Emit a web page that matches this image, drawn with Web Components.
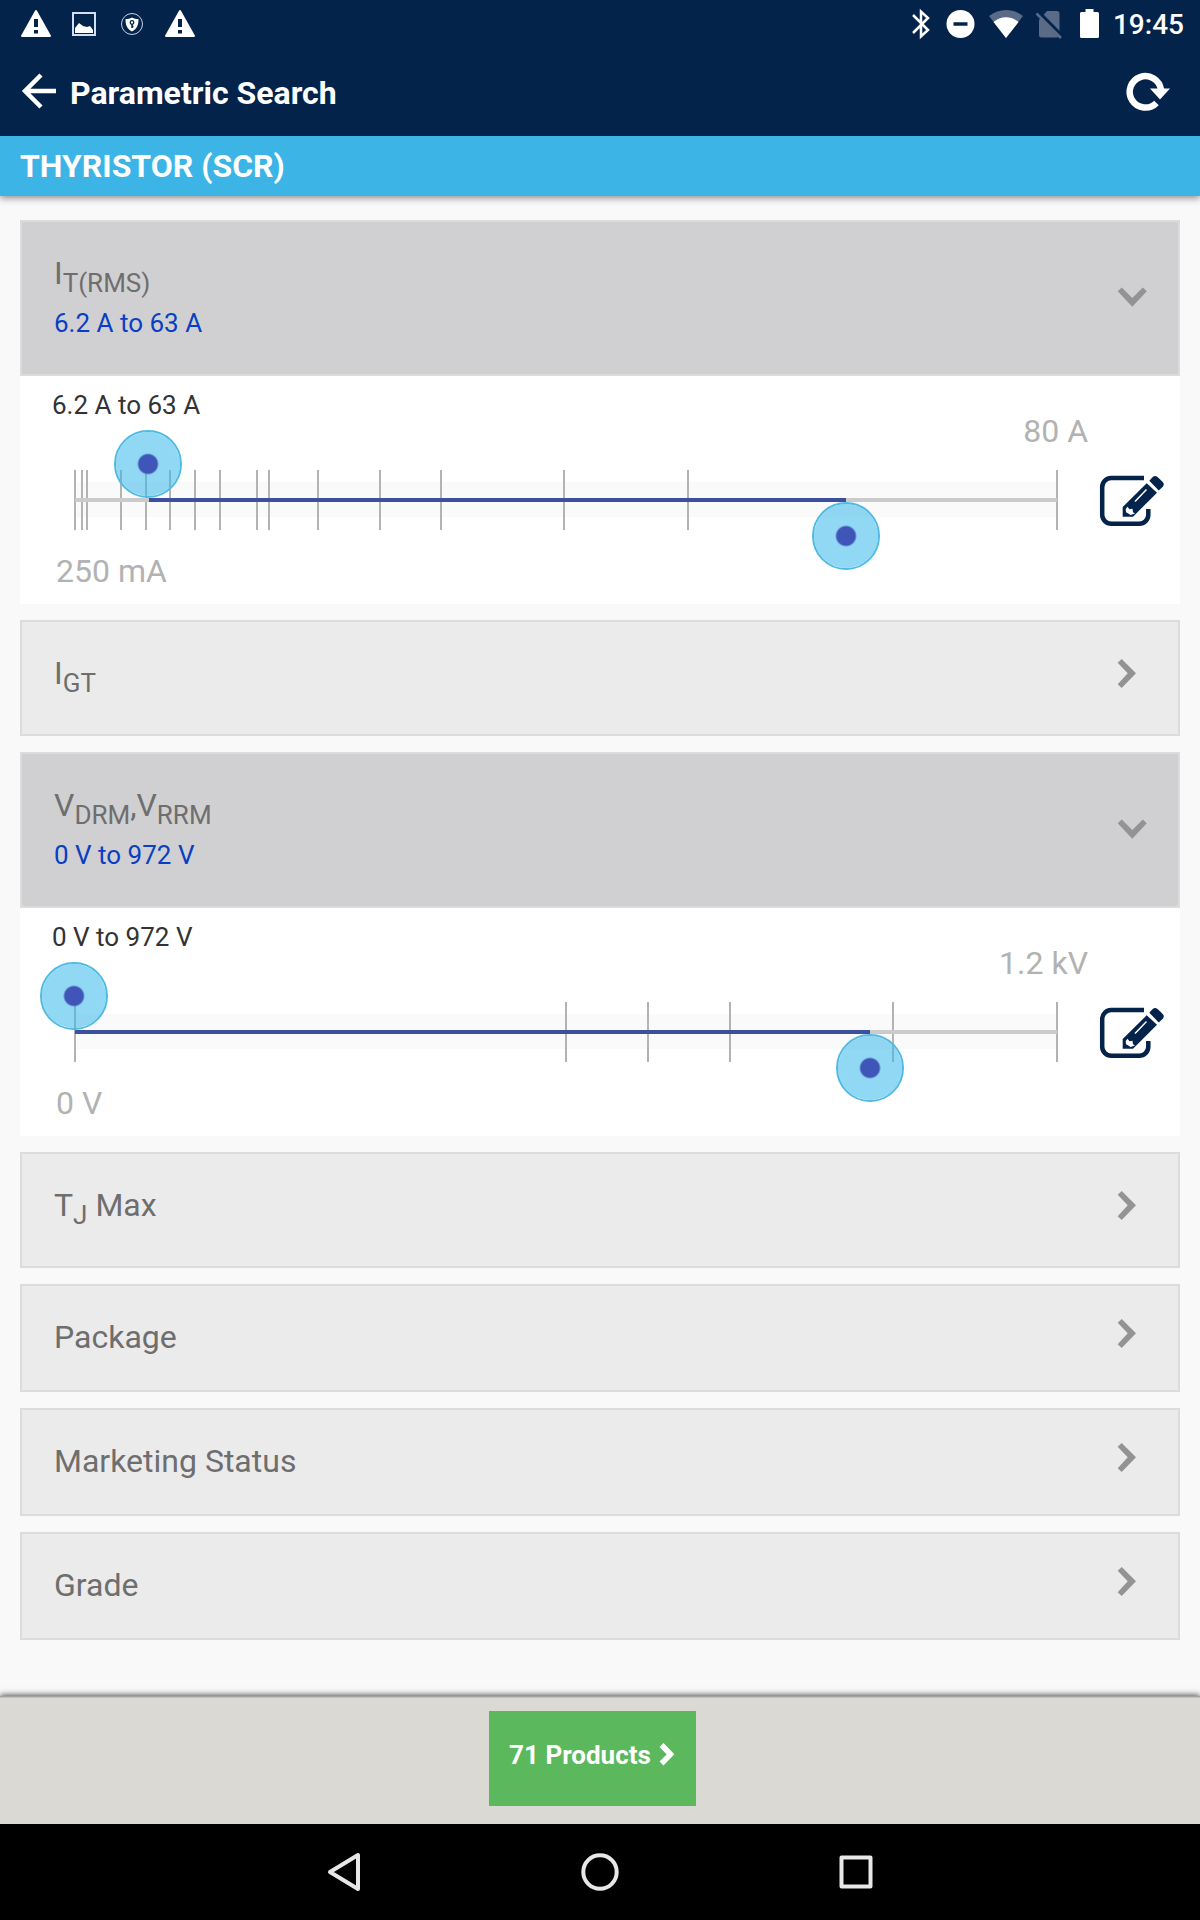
<!DOCTYPE html>
<html lang="en">
<head>
<meta charset="utf-8">
<meta name="viewport" content="width=device-width, initial-scale=1">
<title>Parametric Search</title>
<style>
  html, body { margin: 0; }
  body {
    font-family: Roboto, "Liberation Sans", sans-serif;
    font-size: 32px;
    line-height: 46px;
    color: #333;
    background: #f9f9f9;
  }
  sub { font-size: 26px; line-height: 42px; vertical-align: -8px; }
</style>
</head>
<body>
<search-screen>
  <status-bar slot="top" time="19:45"></status-bar>
  <app-bar slot="top">Parametric Search</app-bar>
  <category-bar slot="top">THYRISTOR (SCR)</category-bar>

  <param-section open>
    <span slot="title">I<sub>T(RMS)</sub></span>
    <span slot="summary">6.2 A to 63 A</span>
    <range-filter name="On-state current" min="0.25" max="80" low="6.23" high="62.85"
      ticks="0.25 0.8 1.25 4 6 8 10 12 15 16 20 25 30 40 50 80">
      <span slot="value">6.2 A to 63 A</span>
      <span slot="max">80 A</span>
      <span slot="min">250 mA</span>
    </range-filter>
  </param-section>
  <param-section><span slot="title">I<sub>GT</sub></span></param-section>
  <param-section open>
    <span slot="title">V<sub>DRM</sub>,V<sub>RRM</sub></span>
    <span slot="summary">0 V to 972 V</span>
    <range-filter name="Off-state voltage" min="0" max="1200" low="0" high="971"
      ticks="0 600 700 800 1000 1200">
      <span slot="value">0 V to 972 V</span>
      <span slot="max">1.2 kV</span>
      <span slot="min">0 V</span>
    </range-filter>
  </param-section>
  <param-section><span slot="title">T<sub>J</sub> Max</span></param-section>
  <param-section><span slot="title">Package</span></param-section>
  <param-section><span slot="title">Marketing Status</span></param-section>
  <param-section><span slot="title">Grade</span></param-section>

  <result-bar slot="bottom">71 Products</result-bar>
  <system-nav slot="bottom"></system-nav>
</search-screen>

<script>
const RESET = `
  *, *::before, *::after { box-sizing: border-box; }
  button { margin: 0; border: 0; padding: 0; background: none; font: inherit; color: inherit; text-align: left; cursor: pointer; }
  svg { display: block; flex: none; overflow: visible; }
`;

function define(name, css, html) {
  customElements.define(name, class extends HTMLElement {
    connectedCallback() {
      if (this.shadowRoot) return;
      const root = this.attachShadow({ mode: "open" });
      const body = typeof html === "function" ? html(this) : html;
      root.innerHTML = `<style>${RESET}${css}</style>${body}`;
    }
  });
}

define("search-screen", `
  :host { display: flex; flex-direction: column; min-height: 100vh; }
  header { box-shadow: 0 2px 7px rgba(0,0,0,.45); }
  main { flex: 1; display: flex; flex-direction: column; gap: 16px; padding: 24px 20px; }
`, `
  <header><slot name="top"></slot></header>
  <main><slot></slot></main>
  <slot name="bottom"></slot>
`);

const WARNING = `<svg width="48" height="48" viewBox="0 0 48 48"><path d="M24 11 38 36H10Z" fill="#fff" stroke="#fff" stroke-width="2" stroke-linejoin="round"/><path d="M22 19h4v8h-4zM22 30h4v3.500h-4z" fill="#03234b"/></svg>`;

define("status-bar", `
  :host { display: flex; justify-content: space-between; align-items: center; height: 48px; padding: 0 16px 0 12px; background: #03234b; color: #fff; }
  div { display: flex; align-items: center; }
  .system { gap: 14px; }
  time { padding-top: 2px; font-size: 28px; font-weight: 500; line-height: 48px; }
`, host => `
  <div>
    ${WARNING}
    <svg width="48" height="48" viewBox="0 0 48 48"><path d="M13 13h22v22H13z" fill="none" stroke="#cfe0f8" stroke-width="2"/><path d="M15 33v-5l4-5 4 3 4 1 3-1 3 4v3Z" fill="#fff"/></svg>
    <svg width="48" height="48" viewBox="0 0 48 48"><circle cx="24" cy="24" r="10.500" fill="none" stroke="#c5d3e6"/><path d="M24 17.500c2 1 4 1.500 6.500 1.500 0 6-1.500 10-6.500 12.500-5-2.500-6.500-6.500-6.500-12.500 2.500 0 4.500-.5 6.500-1.500Z" fill="#fff"/><path d="M24 24v4M24 26.500h1.500" stroke="#03234b" stroke-width="1.500"/><circle cx="24" cy="22.500" r="1.800" fill="none" stroke="#03234b" stroke-width="1.300"/></svg>
    ${WARNING}
  </div>
  <div class="system">
    <svg width="26" height="48" viewBox="-1 0 26 48"><path d="M7 15l15 15-7 6.500V11.500l7 6.500L7 33" fill="none" stroke="#fff" stroke-width="2.500"/></svg>
    <svg width="28" height="48" viewBox="-1 0 28 48"><circle cx="14.500" cy="24" r="14" fill="#fff"/><path d="M7.500 24h14" stroke="#03234b" stroke-width="3.500"/></svg>
    <svg width="34" height="48" viewBox="-1 0 34 48"><path d="M18 38 1 16c10-8 24-8 34 0Z" fill="#596b87"/><path d="M18 38 5.500 22c7-6.500 18-6.500 25 0Z" fill="#fff"/></svg>
    <svg width="30" height="48" viewBox="-1 0 30 48"><path d="M3 20 11 11h10a2.500 2.500 0 0 1 2.500 2.500V35a2.500 2.500 0 0 1-2.500 2.500H5.500A2.500 2.500 0 0 1 3 35Z" fill="#596b87"/><path d="M2 12.500 27 38" stroke="#03234b" stroke-width="5"/><path d="M.5 13.500 25 38" stroke="#596b87" stroke-width="2.500"/></svg>
    <svg width="20" height="48" viewBox="-1 0 20 48"><path d="M5.500 9h8v3h4q1.500 0 1.500 1.500V36.500q0 1.500-1.500 1.500h-16Q0 38 0 36.500v-23Q0 12 1.500 12h4Z" fill="#fff"/></svg>
    <time>${host.getAttribute("time")}</time>
  </div>
`);

define("app-bar", `
  :host { display: flex; align-items: center; gap: 10px; height: 88px; padding: 0 20px; background: #03234b; color: #fff; }
  h1 { flex: 1; margin: 0; padding-top: 2px; font-size: 32px; font-weight: 700; }
`, `
  <button aria-label="Back"><svg width="40" height="40" viewBox="0 0 40 40"><path d="M36 19H6M21 3 5 19l16 16" fill="none" stroke="#fff" stroke-width="4.500"/></svg></button>
  <h1><slot></slot></h1>
  <button aria-label="Reset"><svg width="56" height="40" viewBox="0 1 56 40"><path d="M32.500 32A15.700 15.700 0 1 1 37 19" fill="none" stroke="#fff" stroke-width="6.500"/><path d="M26 17.500h20L36 28.500Z" fill="#fff"/></svg></button>
`);

define("category-bar", `
  :host { display: block; padding: 1px 20px 0; background: #3cb4e6; color: #fff; }
  h2 { margin: 0; font-size: 32px; font-weight: 700; line-height: 59px; }
`, `<h2><slot></slot></h2>`);

define("param-section", `
  :host { display: block; }
  button { display: flex; align-items: center; justify-content: space-between; width: 100%; padding: 0 28px 0 32px; border: 2px solid #dcdcdc; background: #ebebeb; color: #6e6e6e; }
  .text { display: flex; flex-direction: column; padding: 28px 0 30px; }
  ::slotted([slot=summary]) { padding-bottom: 2px; font-size: 26px; line-height: 38px; color: #0a3fc4; }
  :host([open]) button { background: #d0d0d2; }
  .panel { background: #fff; }
`, host => {
  const open = host.hasAttribute("open");
  const shape = open
    ? "M3.700 13.300 7.700 9.500 18.300 20 28.800 9.500 32.800 13.300 18.300 28.700Z"
    : "M7.700 1 3.700 4.700 13.700 15.300 3.700 26.300 7.700 30 22 15.300Z";
  return `
    <button aria-expanded="${open}">
      <span class="text"><slot name="title"></slot><slot name="summary"></slot></span>
      <svg width="36" height="40" viewBox="0 0 36 40"><path d="${shape}" fill="#939393"/></svg>
    </button>
    <div class="panel"><slot></slot></div>`;
});

define("range-filter", `
  :host { display: flex; padding-left: 20px; }
  .field { flex: 1; display: grid; min-width: 0; }
  .field > * { grid-area: 1 / 1; }
  .value { padding: 9px 12px 0; font-size: 26px; line-height: 40px; }
  .max, .min { font-size: 32px; line-height: 46px; color: #b2b2b2; }
  .max { justify-self: end; padding: 32px 4px 0; }
  .min { align-self: end; padding: 0 16px 10px; }
  .slider { display: grid; height: 140px; margin: 54px 0 34px; }
  .slider > * { grid-area: 1 / 1; }
  .scale { align-self: center; padding: 0 35px; }
  input { -webkit-appearance: none; appearance: none; width: 100%; height: 68px; margin: 0; background: none; pointer-events: none; }
  .low { align-self: start; }
  .high { align-self: end; }
  input::-webkit-slider-thumb {
    -webkit-appearance: none; appearance: none; width: 68px; height: 68px; border: 2px solid #4fbbe3; border-radius: 50%;
    background: radial-gradient(circle, #4055b8 9px, rgba(55,184,235,.55) 11px); background-origin: border-box; background-clip: padding-box; pointer-events: auto;
  }
  .edit { align-self: start; padding: 98px 16px 0 8px; }
`, host => {
  const min = +host.getAttribute("min"), max = +host.getAttribute("max");
  const low = +host.getAttribute("low"), high = +host.getAttribute("high");
  const name = host.getAttribute("name");
  const pct = v => (v - min) / (max - min) * 100;
  const ticks = host.getAttribute("ticks").split(/\s+/).map(v =>
    `<line x1="${pct(v)}%" x2="${pct(v)}%" y1="0" y2="60" stroke="#b3b3b3" stroke-width="2"/>`).join("");
  const input = (cls, v, label) =>
    `<input class="${cls}" type="range" min="${min}" max="${max}" step="any" value="${v}" aria-label="${name} ${label}">`;
  return `
    <div class="field">
      <div class="value"><slot name="value"></slot></div>
      <div class="max"><slot name="max"></slot></div>
      <div class="min"><slot name="min"></slot></div>
      <div class="slider">
        <div class="scale">
          <svg width="100%" height="60" shape-rendering="crispEdges">
            <rect x="0" y="12" width="100%" height="35" fill="#fafafa"/>
            ${ticks}
            <rect x="0" y="28" width="100%" height="4" fill="#cbcbcb"/>
            <rect x="${pct(low)}%" y="28" width="${pct(high) - pct(low)}%" height="4" fill="#3d509f"/>
          </svg>
        </div>
        ${input("low", low, "from")}
        ${input("high", high, "to")}
      </div>
    </div>
    <button class="edit" aria-label="Edit ${name}">
      <svg width="64" height="52" viewBox="0 0 64 52" fill="#03234b">
        <path d="M44 4H11.500A9 9 0 0 0 2.200 13V40.500A9 9 0 0 0 11.500 49.700H39A9 9 0 0 0 48.300 40.500V35" fill="none" stroke="#03234b" stroke-width="4.500"/>
        <path d="M46.700 9.300 22.700 33V42.700H33L57 18.700Z" stroke="#fff" stroke-width="6"/>
        <path d="M46.700 9.300 22.700 33V42.700H33L57 18.700Z"/>
        <path d="M49.300 6.700 53 2.700Q55.200 1 57.500 3L62.500 7.700Q64.800 10 63 12.500L58.800 16.500Z"/>
        <path d="M35 27.500 46.500 15.500" stroke="#fff" stroke-width="1.500"/>
        <path d="M27.500 32.700 29.500 35.300 32.500 34.800 33 38.300 35 39.500 30.500 41 28.700 39.800 26 38.300 25.700 35Z" fill="#fff"/>
      </svg>
    </button>`;
});

define("result-bar", `
  :host { display: flex; justify-content: center; padding: 15px 15px 18px 0; background: #dad9d4; box-shadow: inset 0 1px 0 #a3a1a1, inset 0 2px 0 #c2c1be, 0 -1px 6px rgba(0,0,0,.7); }
  button { display: flex; align-items: flex-start; gap: 8px; padding: 24px 22px 31px 20px; background: #5cb85c; color: #fff; font-size: 26px; font-weight: 700; line-height: 40px; }
`, `
  <button><slot></slot><svg width="15" height="40" viewBox="0 0 15 40"><path d="M2.500 10 11.500 19.300 2.500 28.500" fill="none" stroke="#fff" stroke-width="5.500"/></svg></button>
`);

define("system-nav", `
  :host { display: flex; justify-content: center; background: #000; }
  button { flex: 0 1 256px; display: flex; justify-content: center; padding: 28px 0; }
  svg { fill: none; stroke: #e8e8e8; stroke-width: 4; stroke-linejoin: round; }
`, `
  <button aria-label="Back"><svg width="40" height="40" viewBox="0 0 40 40"><path d="M34 3V37L6 20Z"/></svg></button>
  <button aria-label="Home"><svg width="40" height="40" viewBox="0 0 40 40"><circle cx="20" cy="20" r="16.700"/></svg></button>
  <button aria-label="Recent apps"><svg width="40" height="40" viewBox="0 0 40 40"><path d="M5.500 5.500h29v29h-29z"/></svg></button>
`);
</script>
</body>
</html>
